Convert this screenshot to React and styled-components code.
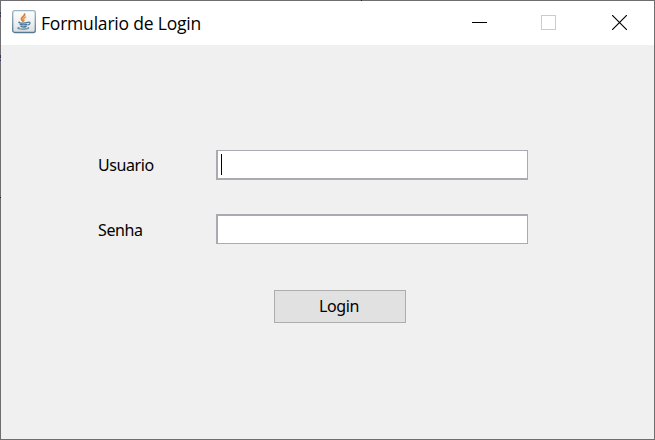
import React from "react";
import styled, { createGlobalStyle } from "styled-components";

const GlobalStyle = createGlobalStyle`
  * { box-sizing: border-box; }
  body { margin: 0; overflow: hidden; background: #f0f0f0; }
`;

const Window = styled.main`
  position: relative;
  width: 655px;
  height: 440px;
  display: flex;
  flex-direction: column;
  border: 1px solid #6e6e70;
  background: #f0f0f0;
  color: #000;
  font-family: "Noto Sans", "Open Sans", sans-serif;

  /* Desktop content showing through the translucent window edge. */
  &::before {
    content: "";
    position: absolute;
    left: -1px;
    top: -1px;
    width: 1px;
    height: 200px;
    background: linear-gradient(
      transparent 12px, #34345c 12px 14px, #6e6e70 14px 15px, #4a3048 15px 17px,
      transparent 17px 55px, #34346a 55px 58px, transparent 58px 60px,
      #303068 60px 61px, transparent 61px 197px, #202024 197px 198px, transparent 198px
    );
  }

  &::after {
    content: "";
    position: absolute;
    left: 360px;
    top: -1px;
    width: 1px;
    height: 1px;
    background: #222226;
  }
`;

const TitleBar = styled.header`
  height: 44px;
  flex: none;
  display: flex;
  align-items: flex-start;
  padding-left: 11px;
  background: #fff;
`;

const AppIcon = styled.svg`
  width: 24px;
  height: 24px;
  margin-top: 9px;
  flex: none;
`;

const Title = styled.h1`
  margin: 9px auto 0 5px;
  font-family: "Open Sans", sans-serif;
  font-size: 17.5px;
  line-height: 26px;
  font-weight: 400;
  letter-spacing: -0.2px;
  white-space: nowrap;
`;

const Controls = styled.div`
  display: flex;
  height: 44px;
`;

const ControlButton = styled.button`
  width: ${(p) => p.$width}px;
  height: 44px;
  display: flex;
  padding: 14px 0 0 ${(p) => p.$inset}px;
  border: 0;
  background: none;
  color: ${(p) => (p.disabled ? "#cccccc" : "#000")};
`;

const Glyph = styled.svg`
  width: 15px;
  height: 15px;
  flex: none;
  fill: none;
  stroke: currentColor;
`;

const Form = styled.form`
  display: flex;
  flex-direction: column;
  padding: 105px 0 0 97px;
`;

const Row = styled.div`
  display: flex;
  height: 30px;
  margin-bottom: ${(p) => p.$gap}px;
`;

const Label = styled.label`
  width: 118px;
  font-size: 16px;
  line-height: ${(p) => p.$line}px;
  letter-spacing: -0.4px;
`;

const Field = styled.div`
  width: 312px;
  height: 30px;
  padding: 3px 0 0 3px;
  border: solid #abaab0;
  border-width: ${(p) => p.$edges};
  background: #fff;
`;

const Caret = styled.div`
  width: 1px;
  height: 21px;
  background: #000;
`;

const LoginButton = styled.button`
  width: 132px;
  height: 33px;
  margin-left: 176px;
  padding: 0 2px 1px 0;
  border: 1px solid #adadad;
  background: #e1e1e1;
  color: #000;
  font-family: inherit;
  font-size: 16px;
  line-height: 30px;
  letter-spacing: -0.4px;
`;

export default function App() {
  return (
    <Window>
      <GlobalStyle />
      <TitleBar>
        <AppIcon viewBox="0 0 24 24">
          <defs>
            <linearGradient id="face" x1="0" y1="0" x2="0" y2="1">
              <stop offset="0" stopColor="#fdfdfd" />
              <stop offset="0.55" stopColor="#eef0f1" />
              <stop offset="1" stopColor="#d9dee2" />
            </linearGradient>
            <linearGradient id="rim" x1="0" y1="0" x2="0" y2="1">
              <stop offset="0" stopColor="#9db4c2" />
              <stop offset="1" stopColor="#56788e" />
            </linearGradient>
          </defs>
          <rect x="0.7" y="0.7" width="22.6" height="21.8" rx="2" fill="url(#face)" stroke="url(#rim)" strokeWidth="1.3" />
          <g fill="none" strokeLinecap="round">
            <path d="M12.6 4.2c.8 2.1-3.6 2.9-3.1 4.8.2.9 1.2 1.4 1.5 2.1" stroke="#e77b27" strokeWidth="1.9" />
            <path d="M13.8 7.1c-1.9.8-2.8 1.6-1.9 2.5.5.6.1 1.1-.5 1.5" stroke="#ed8d3e" strokeWidth="1.2" />
            <path d="M7.2 12.1c-1.4.8 1.8 1.1 4.2 1 2-.1 3-.3 4.2-.7" stroke="#4b7898" strokeWidth="1.3" />
            <path d="M8.2 14.4c1.6.7 5.4.6 6.6.1M9 16.4c1.6.7 3.8.6 5.1.1" stroke="#4b7898" strokeWidth="1.4" />
            <path d="M16.3 12.3c2.5-.7 2.2 2.1-.3 2.7" stroke="#537e9c" strokeWidth="1.2" />
            <path d="M7 17.4c-3.2 1 .6 1.8 4.8 1.7 4-.1 6-.8 4.3-1.6" stroke="#5c829e" strokeWidth="1.1" />
          </g>
        </AppIcon>
        <Title>Formulario de Login</Title>
        <Controls>
          <ControlButton type="button" aria-label="Minimizar" $width={69} $inset={27}>
            <Glyph viewBox="0 0 15 15" shapeRendering="crispEdges"><path d="M0 7.5H15" /></Glyph>
          </ControlButton>
          <ControlButton type="button" aria-label="Maximizar" disabled $width={69} $inset={27}>
            <Glyph viewBox="0 0 15 15"><rect x="0.5" y="0.5" width="14" height="14" /></Glyph>
          </ControlButton>
          <ControlButton type="button" aria-label="Fechar" $width={71} $inset={29}>
            <Glyph viewBox="0 0 15 15"><path d="M0 0L15 15M15 0L0 15" strokeWidth="1.15" /></Glyph>
          </ControlButton>
        </Controls>
      </TitleBar>
      <Form>
        <Row $gap={34}>
          <Label $line={30}>Usuario</Label>
          <Field $edges="1px 1px 2px 2px"><Caret /></Field>
        </Row>
        <Row $gap={46}>
          <Label $line={32}>Senha</Label>
          <Field $edges="2px 1px 1px 2px" />
        </Row>
        <LoginButton type="button">Login</LoginButton>
      </Form>
    </Window>
  );
}
